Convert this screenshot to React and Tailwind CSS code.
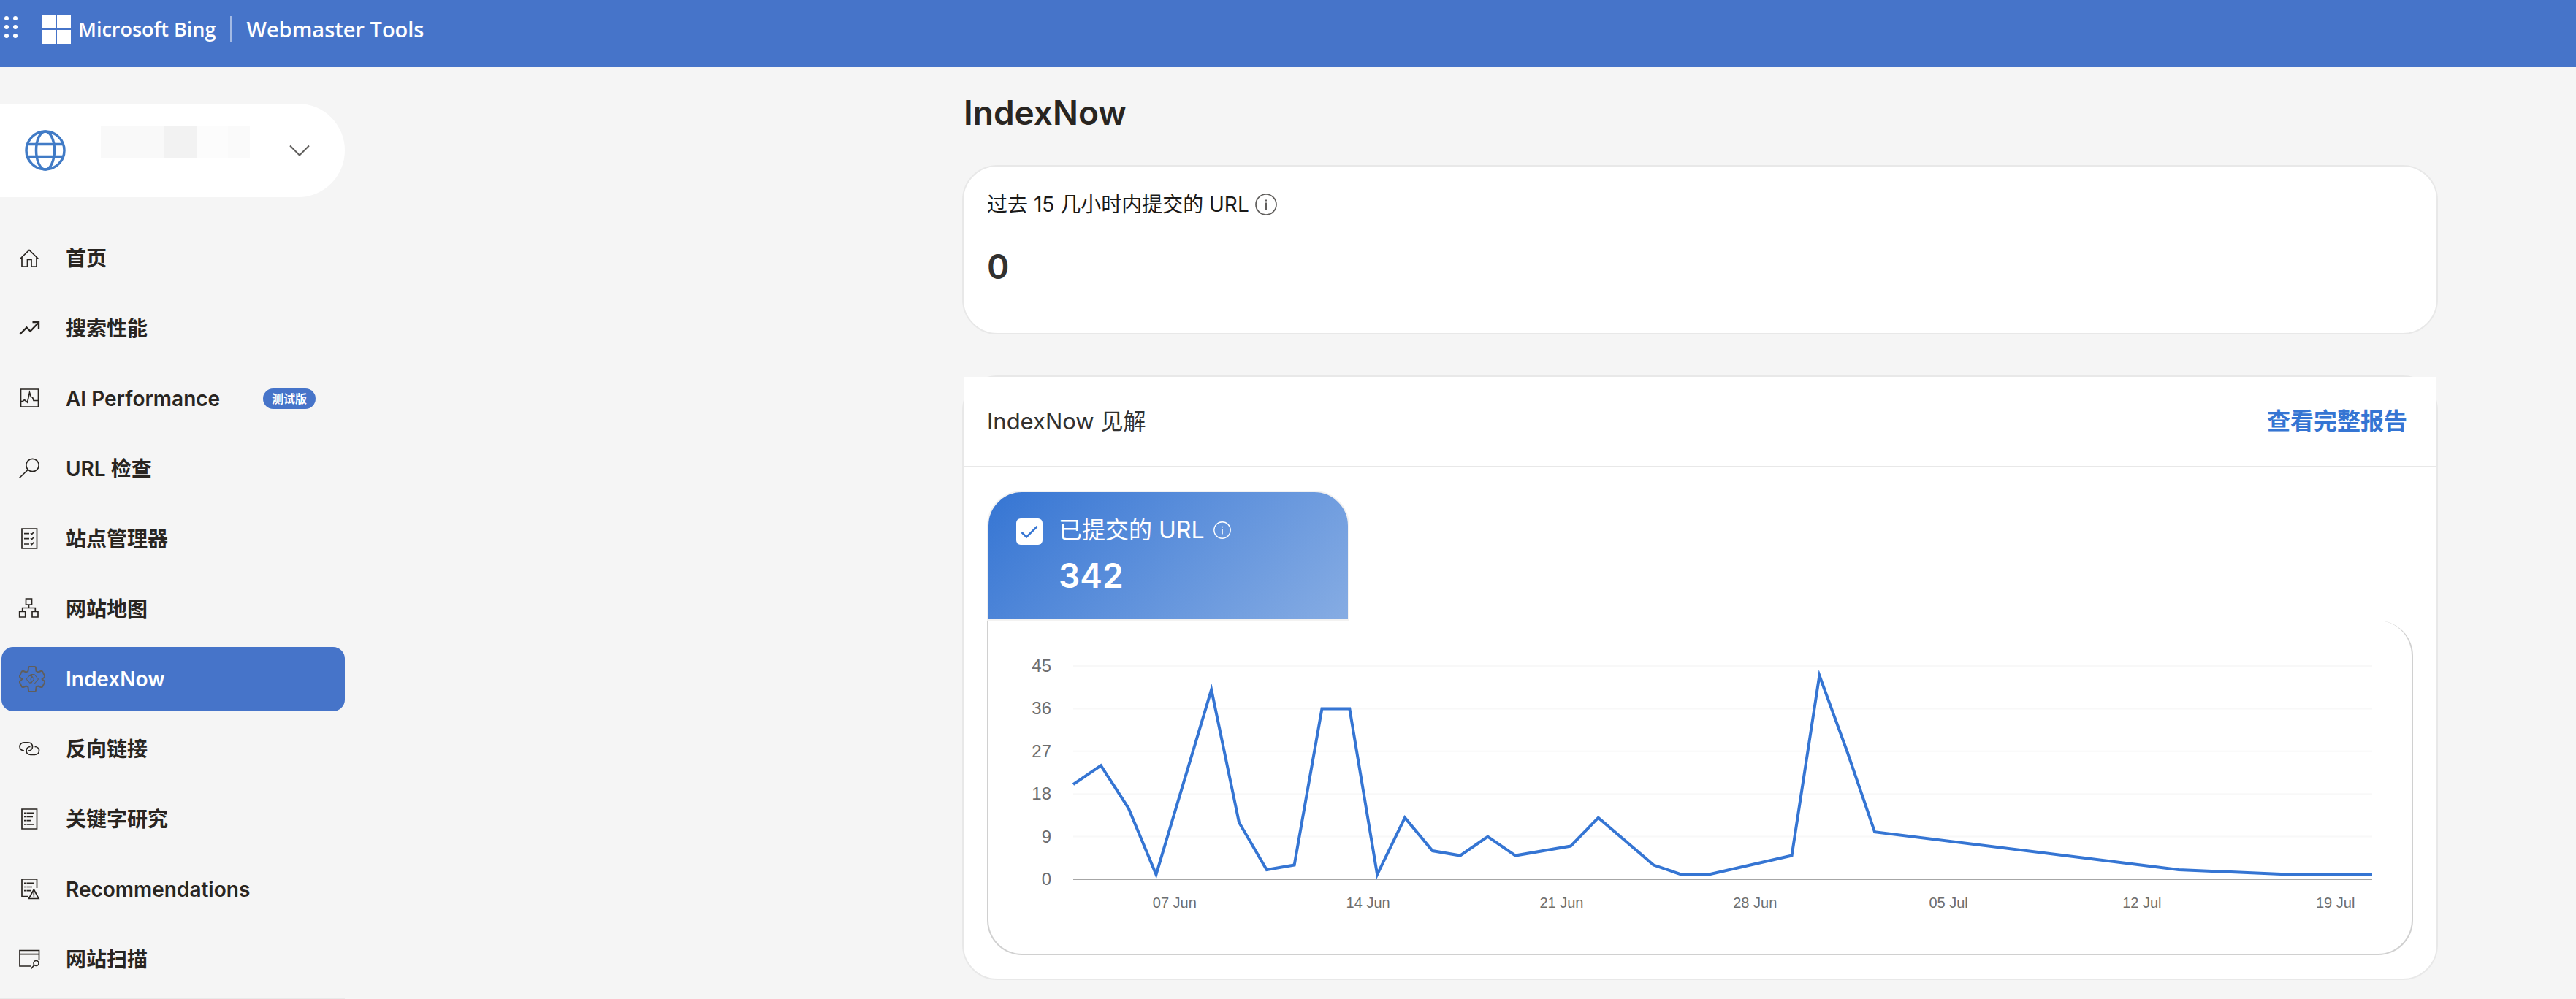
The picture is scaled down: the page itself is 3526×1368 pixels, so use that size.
import React, { useState } from 'react';

const NAV_ITEMS = [
  { id: 'home', label: '首页', icon: 'home' },
  { id: 'search', label: '搜索性能', icon: 'trend' },
  { id: 'ai', label: 'AI Performance', icon: 'pulse', badge: '测试版' },
  { id: 'inspect', label: 'URL 检查', icon: 'search' },
  { id: 'explorer', label: '站点管理器', icon: 'checklist' },
  { id: 'sitemaps', label: '网站地图', icon: 'sitemap' },
  { id: 'indexnow', label: 'IndexNow', icon: 'gear' },
  { id: 'backlinks', label: '反向链接', icon: 'link' },
  { id: 'keywords', label: '关键字研究', icon: 'list' },
  { id: 'recommendations', label: 'Recommendations', icon: 'listAlert' },
  { id: 'scan', label: '网站扫描', icon: 'scan' },
];

const ICONS = {
  home: <path d="M1.5 14.5 14 2.5l12.5 12M4 12.5V25h7.5v-9.5h5.5V25h7V12.5" />,
  trend: <path strokeWidth="2.4" d="M1 22l9.5-9.5 5 5L27 5.5M18.5 5H27v9" />,
  pulse: <path d="M2.5 1h24v24h-24zM2.5 17.5H5l2.5-2 4 3.5 3-13.5 2 6 2 .5 1.5 4.5h6" />,
  search: (
    <>
      <circle cx="18.5" cy="9" r="8.7" />
      <path d="M.5 26.5 12 15.500" />
    </>
  ),
  checklist: (
    <path d="M4 0h20.500v27H4zM7 6.700h7M7 13.700h7M7 21h7M16 6l1.500 1.500L20.500 4.500M16 13l1.500 1.500L20.500 11.500M16 20l1.500 1.500L20.500 18.500" />
  ),
  sitemap: <path d="M9.500 0h8v8h-8zM.7 17.500h8v7.500h-8zM18 17.500h8v7.500h-8zM4.700 17.500v-5h17.600v5M13.500 8v4.500" />,
  link: (
    <path d="M7 16C3.500 16 1 13.700 1 10.400S3.500 4.800 7 4.800h5.500c3.500 0 6 2.400 6 5.600S16 16 12.500 16M21.500 10.500c3.500 0 6 2.300 6 5.500s-2.500 5.500-6 5.500H16c-3.500 0-6-2.300-6-5.500s2.500-5.500 5.500-5.500" />
  ),
  list: (
    <path d="M4 0h20.500v27H4zM7 5.300h2M10.500 5.300H21M7 10.500h2M10.500 10.500H19M7 15.700h2M10.500 15.700H16M7 21h2M10.500 21H21" />
  ),
  listAlert: (
    <path d="M13 23.500H4V0h20.500v12M7 5.300h2M10.500 5.300H21M7 10.500h2M10.500 10.500H18M7 15.700h2M10.500 15.700H16M20.300 14 27 26.500H13.500zM20.300 17.500v5M20.300 23.500v1.500" />
  ),
  scan: (
    <>
      <path d="M16 23H1V1.500h26.500V15M1 6.700h26.500M16.500 26.500l4.500-5" />
      <circle cx="23.5" cy="19" r="3.5" />
    </>
  ),
};

function NavIcon({ name }) {
  if (name === 'gear') {
    return (
      <svg className="h-9 w-9 shrink-0 text-[#605e5c]" viewBox="0 0 36 36" fill="none" stroke="currentColor" strokeWidth="1.9" strokeLinejoin="round">
        <path d="M14.500 1h7q1.500 0 1.500 1.500l.5 4.500 2.500 1.500 4-1.500q1.500-.5 2.300.8L35 13.500q.5 1.200-.5 2.200L31.500 18l3 2.500q1 1 .5 2.200l-2.700 5.500q-.8 1.300-2.300.8l-4-1.500-2.500 1.500-.5 4.500q0 1.500-1.500 1.500h-7q-1.500 0-1.500-1.500l-.5-4.500-2.500-1.500-4 1.500q-1.500.5-2.300-.8L1 22.700q-.5-1.200.5-2.200l3-2.500-3-2.300q-1-1-.5-2.200l2.700-5.700q.8-1.300 2.300-.8l4 1.500L12.500 7l.5-4.500Q13 1 14.500 1z" />
        <path strokeWidth="1.1" d="M16 11.500h5l5.500 6.500-5.500 6.500h-5l4.500-6.500zM15 12.500 10 18l5 5.500 2-2.500-1-3 1.500-2.500z" />
      </svg>
    );
  }
  return (
    <svg className="h-7 w-7 shrink-0 overflow-visible" viewBox="0 0 28 28" fill="none" stroke="currentColor" strokeWidth="1.7">
      {ICONS[name]}
    </svg>
  );
}

function InfoIcon({ className }) {
  return (
    <svg className={className} viewBox="0 0 30 30" fill="none" stroke="currentColor" strokeWidth="1.7">
      <circle cx="15" cy="15" r="14" />
      <path strokeWidth="2" d="M15 12.500V22M15 8.500v2" />
    </svg>
  );
}

// [día, URLs enviadas]
const POINTS = [
  [0, 20], [1, 24], [2, 15], [3, 1], [5, 40], [6, 12], [7, 2], [8, 3], [9, 36], [10, 36],
  [11, 1], [12, 13], [13, 6], [14, 5], [15, 9], [16, 5], [18, 7], [19, 13], [21, 3], [22, 1],
  [23, 1], [26, 5], [27, 43], [28, 27], [29, 10], [40, 2], [44, 1], [47, 1],
];
const Y_TICKS = [45, 36, 27, 18, 9, 0];
const X_TICKS = ['07 Jun', '14 Jun', '21 Jun', '28 Jun', '05 Jul', '12 Jul', '19 Jul'];

const PLOT = { left: 116, right: 1894, top: 62, bottom: 354 };
const xAt = (day) => PLOT.left + (day * (PLOT.right - PLOT.left)) / 47;
const yAt = (value) => PLOT.bottom - (value * (PLOT.bottom - PLOT.top)) / 45;

function SubmissionsChart() {
  return (
    <svg className="block h-auto w-full font-['Liberation_Sans',sans-serif]" viewBox="0 0 1948 456" role="img" aria-label="已提交的 URL">
      {Y_TICKS.map((tick) => (
        <g key={tick}>
          <line x1={PLOT.left} x2={PLOT.right} y1={yAt(tick)} y2={yAt(tick)} stroke={tick === 0 ? '#a6a6a6' : '#f8f8f8'} strokeWidth="2" />
          <text x="86" y={yAt(tick) + 8} textAnchor="end" fontSize="24" fill="#6e6e6e">{tick}</text>
        </g>
      ))}
      {X_TICKS.map((tick, i) => (
        <text key={tick} x={xAt(3.67 + i * 7)} y="393" textAnchor="middle" fontSize="20" fill="#6e6e6e">{tick}</text>
      ))}
      <polyline points={POINTS.map(([d, v]) => `${xAt(d)},${yAt(v)}`).join(' ')} fill="none" stroke="#3575d3" strokeWidth="4" strokeMiterlimit="10" />
    </svg>
  );
}

function Header() {
  return (
    <header className="flex h-[92px] items-start bg-[#4674c9] pt-[18px] text-white">
      <button className="mt-1 ml-[2px] h-9 w-7" aria-label="Apps">
        <svg viewBox="0 0 28 36" fill="currentColor">
          {[3, 15, 27].map((y) => (
            <g key={y}>
              <circle cx="7" cy={y} r="3" />
              <circle cx="19" cy={y} r="3" />
            </g>
          ))}
        </svg>
      </button>
      <a href="#home" className="ml-7 flex h-11 items-center font-['Open_Sans',sans-serif] font-semibold">
        <svg className="h-[39px] w-[39px]" viewBox="0 0 39 39" fill="currentColor">
          <path d="M0 0h18v18H0zM20 0h19v18H20zM0 20h18v19H0zM20 20h19v19H20z" />
        </svg>
        <span className="ml-[10px] text-[27px]">Microsoft Bing</span>
        <span className="mx-5 h-9 w-[2px] bg-white/50" />
        <span className="text-[29px]">Webmaster Tools</span>
      </a>
    </header>
  );
}

function Sidebar({ active, onSelect }) {
  return (
    <aside className="w-[472px] shrink-0 pt-[50px]">
      <button className="flex h-32 w-full items-center rounded-r-full bg-white pr-12 pl-[34px]" aria-label="Site">
        <svg className="h-14 w-14 text-[#417bc6]" viewBox="0 0 56 56" fill="none" stroke="currentColor" strokeWidth="3.5">
          <circle cx="28" cy="28" r="26" />
          <ellipse cx="28" cy="28" rx="12.5" ry="26" />
          <path d="M3 19.500h50M3 36.500h50" />
        </svg>
        <span className="mb-6 ml-12 flex h-11">
          <span className="w-[87px] bg-[#f9f9f9]" />
          <span className="w-11 bg-[#f2f2f2]" />
          <span className="w-[43px] bg-[#fcfcfc]" />
          <span className="w-[30px] bg-[#fafafa]" />
        </span>
        <svg className="ml-auto h-7 w-7 text-[#605e5c]" viewBox="0 0 28 28" fill="none" stroke="currentColor" strokeWidth="2">
          <path d="M1 7.500l13 13 13-13" />
        </svg>
      </button>

      <nav className="mt-10 flex flex-col gap-2 border-b-2 border-[#e9e9e9] pb-2 pl-[2px]">
        {NAV_ITEMS.map((item) => (
          <a
            key={item.id}
            href={`#${item.id}`}
            onClick={() => onSelect(item.id)}
            className={`flex h-[88px] items-center rounded-2xl pl-6 text-[28px] font-semibold ${
              active === item.id ? 'bg-[#4674c9] text-white' : 'text-[#292521]'
            }`}
          >
            <span className="flex w-16 shrink-0">
              <NavIcon name={item.icon} />
            </span>
            {item.label}
            {item.badge && (
              <span className="mr-10 ml-auto flex h-7 items-center rounded-full bg-[#4674c9] px-3 text-base text-white">{item.badge}</span>
            )}
          </a>
        ))}
      </nav>
    </aside>
  );
}

function App() {
  const [active, setActive] = useState('indexnow');
  const [checked, setChecked] = useState(true);

  return (
    <div className="min-h-screen bg-[#f5f5f5] font-['Inter','Noto_Sans_CJK_SC',sans-serif] text-[#292521]">
      <Header />
      <div className="flex">
        <Sidebar active={active} onSelect={setActive} />

        <main className="min-w-0 flex-1 pt-8 pr-[189px] pl-[845px]">
          <h1 className="pl-0.5 text-[46px]/[60px] font-semibold">IndexNow</h1>

          {/* Envíos recientes */}
          <section className="mt-[42px] h-[232px] rounded-[48px] border-2 border-[#e8e8e8] bg-white px-8 pt-8">
            <h2 className="flex items-center gap-2 text-[28px]/[40px] text-[#1b1a19]">
              过去 15 几小时内提交的 URL
              <InfoIcon className="h-[30px] w-[30px] text-[#605e5c]" />
            </h2>
            <p className="mt-[35px] text-[46px]/[60px] font-semibold text-[#323130]">0</p>
          </section>

          {/* Informe de IndexNow */}
          <section className="mt-14 rounded-[48px] border-2 border-[#e8e8e8] bg-white">
            <div className="flex h-[124px] items-center justify-between border-b-2 border-[#e8e8e8] bg-white pr-10 pl-8">
              <h2 className="text-[31px] text-[#323130]">IndexNow 见解</h2>
              <a href="#report" className="text-[32px] font-semibold text-[#3575d3]">查看完整报告</a>
            </div>

            <div className="p-8">
              <label className="flex h-[178px] w-[496px] gap-[22px] rounded-t-[48px] border-2 border-[#f3f2f1] bg-linear-135 from-[#3575d3] to-[#86ace3] pt-7 pl-[38px] text-white">
                <span className="relative mt-2 h-9 w-9">
                  <input
                    type="checkbox"
                    checked={checked}
                    onChange={() => setChecked(!checked)}
                    className="block h-9 w-9 appearance-none rounded-md bg-white"
                  />
                  {checked && (
                    <svg className="pointer-events-none absolute inset-0 text-[#3575d3]" viewBox="0 0 36 36" fill="none" stroke="currentColor" strokeWidth="2.5">
                      <path d="M7.500 19l6.500 6.500L28.500 11" />
                    </svg>
                  )}
                </span>
                <span>
                  <span className="flex items-center gap-3 text-[32px]/[48px]">
                    已提交的 URL
                    <InfoIcon className="h-6 w-6" />
                  </span>
                  <span className="mt-2 block text-[46px]/[60px] font-semibold">342</span>
                </span>
              </label>
              <div className="rounded-r-[48px] rounded-bl-[48px] border-2 border-t-0 border-[#d0d0d0]">
                <SubmissionsChart />
              </div>
            </div>
          </section>
        </main>
      </div>
    </div>
  );
}

export default App;
